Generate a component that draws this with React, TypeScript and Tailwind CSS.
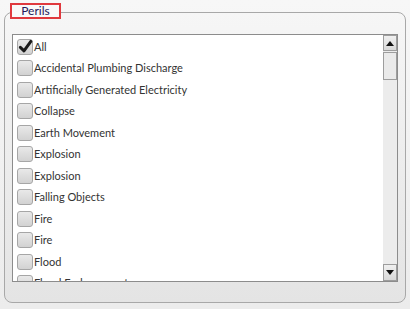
import React from 'react';

const perils = [
  'All',
  'Accidental Plumbing Discharge',
  'Artificially Generated Electricity',
  'Collapse',
  'Earth Movement',
  'Explosion',
  'Explosion',
  'Falling Objects',
  'Fire',
  'Fire',
  'Flood',
  'Flood Endorsement',
];

const CheckBox: React.FC<{ checked?: boolean }> = ({ checked }) => (
  <div className="relative w-4 h-4 shrink-0 rounded-[3px] border border-[#a6a6a6] bg-gradient-to-b from-[#e9e9e9] to-[#d2d2d2]">
    {checked && (
      <svg className="absolute left-[0px] top-[-1px]" width="15" height="15" viewBox="0 0 14 14">
        <path d="M2.2 7.8 L5.6 11 L12 2.2" fill="none" stroke="#1a1a1a" strokeWidth="2.8" strokeLinecap="round" strokeLinejoin="round" />
      </svg>
    )}
  </div>
);

export default function App() {
  return (
    <div className="w-[410px] h-[309px] overflow-hidden bg-gradient-to-b from-[#f7f7f7] to-[#ececec] pt-3 pl-1 font-['Lato',sans-serif]">
      <div className="relative w-[402px] h-[291px] rounded-lg border border-[#a8a8a8] bg-gradient-to-b from-[#f6f6f6] to-[#e4e4e4] pt-[21px] px-[7px]">
        {/* group title */}
        <div className="absolute left-[5px] top-[-10px] h-[16px] w-[51px] border-2 border-[#e0393e] bg-[#f9f9f9] flex items-center justify-center">
          <span className="text-[12px] leading-none text-[#24175a]">Perils</span>
        </div>

        {/* list box */}
        <div className="flex h-[248px] w-[386px] border border-[#8c8c8c] bg-white">
          <div className="flex-1 overflow-hidden pt-[1px] pl-[4px]">
            {perils.map((p, i) => (
              <div key={i} className="flex items-center h-[21.5px]">
                <CheckBox checked={i === 0} />
                <span className="ml-[1px] text-[11px] text-[#333333] whitespace-nowrap">{p}</span>
              </div>
            ))}
          </div>

          {/* scrollbar */}
          <div className="flex flex-col w-[14px] bg-[#ececec]">
            <div className="h-[16px] border border-[#9d9d9d] bg-gradient-to-b from-[#f0f0f0] to-[#d8d8d8] flex items-center justify-center">
              <svg width="8" height="5" viewBox="0 0 8 5">
                <path d="M0 5 L4 0 L8 5 Z" fill="#111" />
              </svg>
            </div>
            <div className="mt-px h-[28px] border border-[#9d9d9d] bg-[#eaeaea]" />
            <div className="flex-1" />
            <div className="h-[17px] border border-[#9d9d9d] bg-gradient-to-b from-[#f0f0f0] to-[#d8d8d8] flex items-center justify-center">
              <svg width="8" height="5" viewBox="0 0 8 5">
                <path d="M0 0 L8 0 L4 5 Z" fill="#111" />
              </svg>
            </div>
          </div>
        </div>
      </div>
    </div>
  );
}
